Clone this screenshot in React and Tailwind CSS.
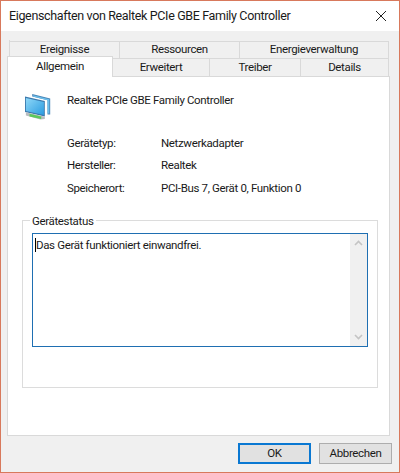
import React from 'react';

// two overlapping monitors on a green base
const NetworkIcon = () => (
  <svg width="29" height="27" viewBox="0 0 32 30" className="shrink-0">
    <defs>
      <linearGradient id="scr" x1="0" y1="0" x2="1" y2="1">
        <stop offset="0" stopColor="#8fd8f8" />
        <stop offset="1" stopColor="#2a9be0" />
      </linearGradient>
    </defs>
    <path d="M9 1 L29 6 L29 24 L26 24 L26 8 L9 4 Z" fill="#4a86b8" />
    <path d="M10 2.5 L28 7 L28 23 L26 22.5 L26 8 L10 4 Z" fill="#6cc0ec" />
    <path d="M1 4 L23 9 L23 26 L1 21 Z" fill="#3a78ac" />
    <path d="M2 5.5 L22 10 L22 24.5 L2 20 Z" fill="url(#scr)" />
    <path d="M2 21.5 L23 26.5 L23 29 L18 29.5 L2 25 Z" fill="#b8bcc0" />
    <path d="M6 23 L19 26.2 L19 29 L6 26 Z" fill="#5cc85c" />
  </svg>
);

const Chevron = ({ up }) => (
  <svg width="9" height="6" viewBox="0 0 9 6" fill="none" stroke="#c4c4c4" strokeWidth="1.6">
    <path d={up ? 'M1 5 L4.5 1.5 L8 5' : 'M1 1 L4.5 4.5 L8 1'} />
  </svg>
);

const InfoRow = ({ label, value }) => (
  <div className="flex h-[22.5px] items-center">
    <div className="w-[94px]">{label}</div>
    <div>{value}</div>
  </div>
);

const Tab = ({ label, className }) => (
  <div className={`flex h-full items-center justify-center border-t border-r border-[#d9d9d9] bg-[#f0f0f0] ${className}`}>
    {label}
  </div>
);

export default function App() {
  return (
    <div className="flex h-[473px] w-[400px] flex-col border border-[#d8795c] bg-[#f0f0f0] font-['Roboto',sans-serif] text-[11.5px] tracking-[-0.35px] text-[#1a1a1a]">
      {/* title bar */}
      <div className="flex h-[30px] shrink-0 items-center justify-between bg-white pl-[8px] pr-[12px]">
        <span className="text-[12.5px]">Eigenschaften von Realtek PCIe GBE Family Controller</span>
        <svg width="12" height="12" viewBox="0 0 12 12" stroke="#222" strokeWidth="1" fill="none">
          <path d="M1 1 L11 11 M11 1 L1 11" />
        </svg>
      </div>

      <div className="flex flex-1 flex-col pl-[6px] pr-[9px]">
        {/* tabs */}
        <div className="mt-[9px] ml-[2px] mr-[1px] flex h-[18px] border-l border-[#d9d9d9] pt-[1px]">
          <Tab label="Ereignisse" className="w-[110px]" />
          <Tab label="Ressourcen" className="w-[120px]" />
          <Tab label="Energieverwaltung" className="flex-1" />
        </div>
        <div className="relative mr-[1px] flex h-[18px]">
          <div className="relative z-10 -mt-[2px] flex h-[21px] w-[106px] items-center justify-center border-x border-t border-[#d9d9d9] bg-white">
            Allgemein
          </div>
          <Tab label="Erweitert" className="w-[97px]" />
          <Tab label="Treiber" className="w-[91px]" />
          <Tab label="Details" className="flex-1" />
        </div>

        {/* panel */}
        <div className="flex h-[360px] flex-col border border-[#d9d9d9] bg-white pl-[14px] pr-[11px]">
          <div className="mt-[9px] flex items-start">
            <div className="mt-[7px] ml-[2px]"><NetworkIcon /></div>
            <div className="mt-[6px] ml-[14px]">Realtek PCIe GBE Family Controller</div>
          </div>

          <div className="mt-[12px] ml-[45px]">
            <InfoRow label="Gerätetyp:" value="Netzwerkadapter" />
            <InfoRow label="Hersteller:" value="Realtek" />
            <InfoRow label="Speicherort:" value="PCI-Bus 7, Gerät 0, Funktion 0" />
          </div>

          <fieldset className="mt-[13px] h-[175px] border border-[#dcdcdc] px-[9px] pb-0">
            <legend className="ml-[-2px] px-[2px] leading-[16px]">Gerätestatus</legend>
            <div className="mt-[4px] flex h-[114px] border border-[#1f6fb2]">
              <div className="flex-1 pl-[2px] pt-[3px]">
                <span className="border-l border-black leading-[14px]">Das Gerät funktioniert einwandfrei.</span>
              </div>
              <div className="flex w-[17px] flex-col items-center justify-between bg-[#f0f0f0] py-[6px]">
                <Chevron up />
                <Chevron />
              </div>
            </div>
          </fieldset>
        </div>

        {/* buttons */}
        <div className="mt-[7px] -mr-[2px] flex justify-end gap-[8px]">
          <button className="h-[21px] w-[73px] border-2 border-[#0a78d2] bg-[#e1e1e1]">OK</button>
          <button className="h-[21px] w-[73px] border border-[#adadad] bg-[#e1e1e1]">Abbrechen</button>
        </div>
      </div>
    </div>
  );
}
